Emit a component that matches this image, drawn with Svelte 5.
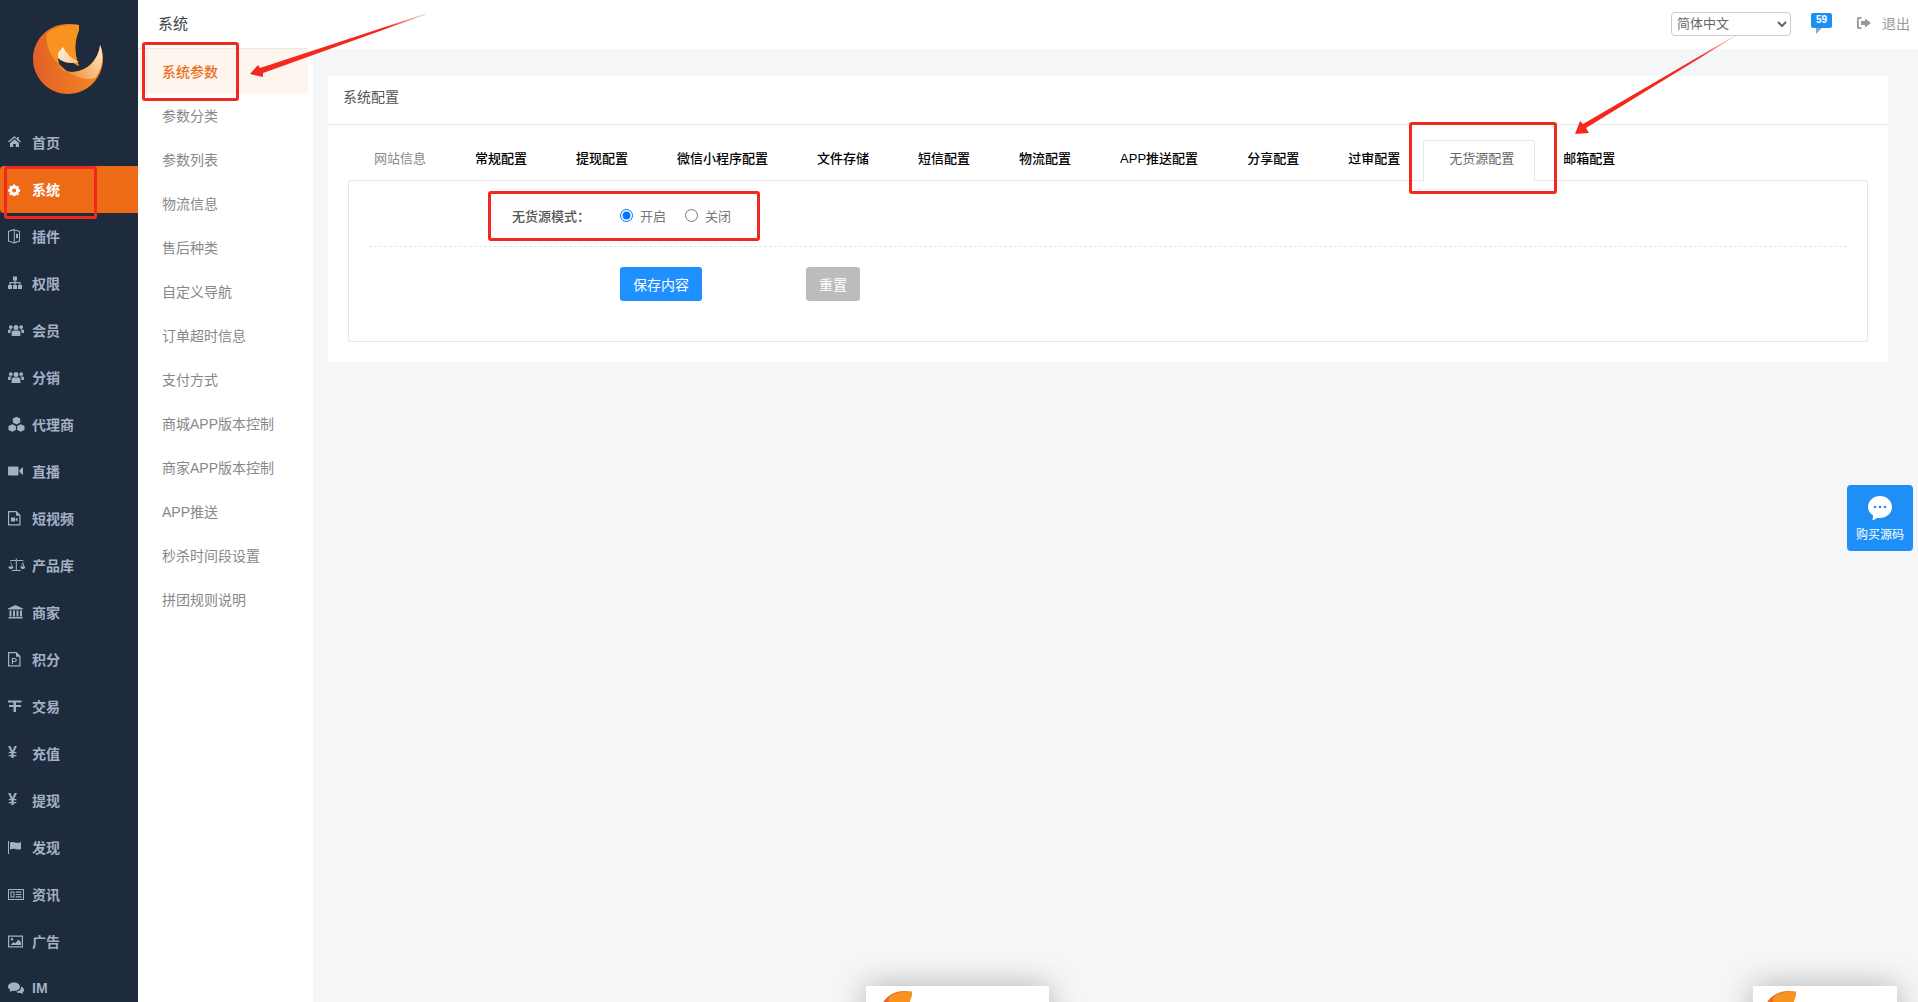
<script>
  const nav = [
    { label: "首页", icon: "home" },
    { label: "系统", icon: "cog", active: true },
    { label: "插件", icon: "plugin" },
    { label: "权限", icon: "sitemap" },
    { label: "会员", icon: "users" },
    { label: "分销", icon: "users" },
    { label: "代理商", icon: "cubes" },
    { label: "直播", icon: "video" },
    { label: "短视频", icon: "fileVideo" },
    { label: "产品库", icon: "balance" },
    { label: "商家", icon: "bank" },
    { label: "积分", icon: "fileP" },
    { label: "交易", icon: "trade" },
    { label: "充值", yen: true },
    { label: "提现", yen: true },
    { label: "发现", icon: "flag" },
    { label: "资讯", icon: "news" },
    { label: "广告", icon: "image" },
    { label: "IM", icon: "comments" },
  ];

  const icons = {
    home: "M6.5 2L0 7.5l.8 1L6.500 3.700l5.700 4.800.8-1-2.300-2V3H9v1.700zM2 9l4.500-3.800L11 9v4H7.800v-3H5.200v3H2z",
    cog: "M5.800 3h2.400l.3 1.500 1.200.5 1.300-.8 1.600 1.600-.8 1.300.5 1.200 1.500.3v2.400l-1.500.3-.5 1.200.8 1.300-1.600 1.600-1.300-.8-1.200.5-.3 1.500H5.800l-.3-1.500-1.200-.5-1.300.8-1.600-1.600.8-1.300-.5-1.200L.2 10.800V8.400l1.500-.3.5-1.200-.8-1.300 1.600-1.600 1.300.8 1.200-.5zM7 7.300a2.300 2.300 0 1 0 0 4.600 2.300 2.300 0 0 0 0-4.600z",
    plugin: "M0 3l5.500-2 6.500 2v10.500L6.500 15.500 0 13.500zM1 3.700v9l4.800 1.500V2.300zM6.800 2.500v11.500l4.200-1.300V3.700zM8 6l2-.5V10l-2 .5z",
    sitemap: "M5 1.500h4v4H7.600V7H12.500V10H14v4h-4v-4h1.400V8.200H7.600V10H9v4H5v-4h1.400V8.200H2.600V10H4v4H0v-4h1.400V7h5V5.500H5z",
    users: "M8 3a2.500 2.500 0 1 1 0 5 2.500 2.500 0 0 1 0-5zM2.800 3.200a1.900 1.900 0 1 1 0 3.800 1.900 1.900 0 0 1 0-3.800zM13.200 3.200a1.900 1.900 0 1 1 0 3.800 1.900 1.900 0 0 1 0-3.800zM3.600 14V10.500c0-1.300 1-2 2-2h4.800c1 0 2 .7 2 2V14zM0 11V9c0-1 .7-1.500 1.500-1.500H4c-.8.5-1.500 1.400-1.500 2.700V11zM16 11V9c0-1-.7-1.500-1.500-1.500H12c.8.5 1.500 1.400 1.500 2.700V11z",
    cubes: "M8.500.8l3.700 1.800v4L8.500 8.400 4.800 6.600v-4zM4.200 8.200l3.700 1.800v4l-3.700 1.800L.5 14v-4zM12.800 8.200l3.700 1.800v4l-3.700 1.800L9.100 14v-4z",
    video: "M0 4.500a1 1 0 0 1 1-1h8.500a1 1 0 0 1 1 1v7a1 1 0 0 1-1 1H1a1 1 0 0 1-1-1zM11.500 7l3.500-3v8l-3.500-3z",
    fileVideo: "M0 1h8.500L12.500 5v10.500H0zM1.200 2.200v12.100h10.100V5.800H8V2.200zM3 7.500h4v4H3zM7.500 9l2-1.500v4l-2-1.500z",
    balance: "M7.800 1.500h1v11.500h4v1H3.800v-1h4V4H2.500l2 5.500h.9a2.500 2.500 0 0 1-5 0h.9l2-5.800H2V3h5.800zM1.300 9.500h2.500L2.500 6zM9 3h6.500v.7h-1l2 5.800h.9a2.500 2.500 0 0 1-5 0h.9l2-5.500H9zM12.900 9.500h2.500L14.100 6z",
    bank: "M7.500 1l7.500 3.500v1H0v-1zM1.500 6.500h2v6h-2zM5 6.500h2v6H5zM8.500 6.500h2v6h-2zM12 6.500h2v6h-2zM.5 13h14v1.500H.5z",
    fileP: "M0 1h8.500L12.500 5v10.500H0zM1.200 2.200v12.100h10.100V5.800H8V2.200zM3.800 7h3a2 2 0 0 1 0 4H5v2H3.800zM5 8v2h1.700a1 1 0 0 0 0-2z",
    trade: "M0 2.500h13.500v2H8V7h5v2H8v5H5.500V9H1V7h4.500V4.500H0z",
    flag: "M0 2h1v13H0zM2 3.500c2-1 3.500-.5 5.500 0s3.500.5 5.500-.5v7c-2 1-3.500.5-5.500 0s-3.500-.5-5.500.5z",
    news: "M0 3h16v11H0zM1 4v9h14V4zM2.500 5.500h4v6h-4zM3.500 6.500v4h2v-4zM7.800 5.500h5.700v1.200H7.800zM7.800 8h5.700v1H7.800zM7.800 10.300h5.700v1.200H7.800z",
    image: "M0 2.500h15v12H0zM1.200 3.700v9.600h12.600V3.700zM4 5a1.300 1.300 0 1 1 0 2.600A1.300 1.300 0 0 1 4 5zM2.500 12l3-3 1.500 1.500 3.500-4 2.500 3V12z",
    comments: "M6 2.500c3.300 0 6 1.800 6 4.200s-2.700 4.200-6 4.200c-.6 0-1.200-.1-1.700-.2L1.500 12.200l.9-2.200C1 9.200 0 8 0 6.700 0 4.300 2.700 2.500 6 2.500zM13 6.500c1.800.6 3 2 3 3.400 0 1-.6 1.900-1.500 2.500l.6 1.800-2.400-1.200c-1.500.2-3.500-.2-4.700-1.300 3 0 5.500-2.300 5-5.200z",
  };

  const subnav = [
    "系统参数", "参数分类", "参数列表", "物流信息", "售后种类", "自定义导航", "订单超时信息",
    "支付方式", "商城APP版本控制", "商家APP版本控制", "APP推送", "秒杀时间段设置", "拼团规则说明",
  ];

  const tabs = [
    "网站信息", "常规配置", "提现配置", "微信小程序配置", "文件存储", "短信配置", "物流配置",
    "APP推送配置", "分享配置", "过审配置", "无货源配置", "邮箱配置",
  ];
  const activeTab = "无货源配置";

  let mode = $state("on");
</script>

{#snippet logo()}
  <svg viewBox="0 0 70 70" class="logo-svg">
    <defs>
      <linearGradient id="lg-base" x1="0" y1="0.7" x2="1" y2="0.6">
        <stop offset="0" stop-color="#e25f28" />
        <stop offset="1" stop-color="#f58a22" />
      </linearGradient>
      <linearGradient id="lg-cres" x1="0.1" y1="0.6" x2="1" y2="0.2">
        <stop offset="0" stop-color="#f58d2c" />
        <stop offset="1" stop-color="#fde2c4" />
      </linearGradient>
      <linearGradient id="lg-tip" x1="0" y1="0" x2="1" y2="1">
        <stop offset="0" stop-color="#fff6ea" />
        <stop offset="1" stop-color="#f9c08c" />
      </linearGradient>
    </defs>
    <path fill="url(#lg-base)" d="M46 1C41 .3 38 0 35 0 15 0 0 16 0 35s16 35 35 35 35-16 35-35c0-5-1-10-3-14-1 13-12 27-28 27-8 0-14-6-14-15 2-3 3-5 5-6 3 6 9 12 16 15-5-13-5-24 0-36z" />
    <path fill="#f7931e" d="M46 1C39 0 24 1 14 9c-2 10 2 26 21 39-7-1-10-6-10-15 2-3 3-5 5-6 3 6 9 12 16 15-5-13-5-24 0-36z" />
    <path fill="url(#lg-cres)" d="M67 21c4 10 3 23-5 33-10 3-24-1-36-14 2 5 7 8 13 8 16 0 27-14 28-27z" />
    <path fill="url(#lg-tip)" d="M25 29l5-6c3 6 9 12 16 15-8 2-16 1-21-4z" />
  </svg>
{/snippet}

<div class="page">
  <aside class="sidebar">
    <div class="logo">{@render logo()}</div>
    <ul class="nav">
      {#each nav as item}
        <li class="nav-item" class:active={item.active}>
          <span class="nav-icon">
            {#if item.yen}
              <span class="yen">¥</span>
            {:else}
              <svg width="17" height="16" viewBox="0 0 17 16" fill="currentColor" fill-rule="evenodd"><path d={icons[item.icon]} /></svg>
            {/if}
          </span>
          <span>{item.label}</span>
        </li>
      {/each}
    </ul>
  </aside>

  <nav class="subnav">
    <div class="subnav-title">系统</div>
    <ul>
      {#each subnav as name, i}
        <li class="sub-item" class:active={i === 0}>{name}</li>
      {/each}
    </ul>
  </nav>

  <div class="main">
    <header class="topbar">
      <select class="lang">
        <option>简体中文</option>
        <option>English</option>
      </select>
      <span class="msg"><span class="badge">59</span></span>
      <span class="logout">
        <svg width="16" height="16" viewBox="0 0 16 16" fill="currentColor"><path d="M5.500 2H2.500A1.500 1.500 0 0 0 1 3.500v9A1.500 1.500 0 0 0 2.500 14h3v-1.800H2.800V3.800h2.700zM9 3.500l6 4.500-6 4.500V10H5V6h4z" /></svg>
        退出
      </span>
    </header>

    <section class="card">
      <div class="card-head">系统配置</div>
      <div class="card-body">
        <ul class="tabs">
          {#each tabs as tab, i}
            <li class="tab" class:active={tab === activeTab} class:first={i === 0}>{tab}</li>
          {/each}
        </ul>
        <div class="panel">
          <div class="form-row">
            <span class="form-label">无货源模式：</span>
            <label class="radio"><input type="radio" name="mode" value="on" bind:group={mode} />开启</label>
            <label class="radio"><input type="radio" name="mode" value="off" bind:group={mode} />关闭</label>
          </div>
          <div class="actions">
            <button class="btn save">保存内容</button>
            <button class="btn reset">重置</button>
          </div>
        </div>
      </div>
    </section>
  </div>

  <div class="float-buy">
    <svg width="24" height="24" viewBox="0 0 24 24">
      <path fill="#fff" d="M12 0c6.600 0 12 4.900 12 11s-5.400 11-12 11c-.8 0-1.500-.1-2.300-.2L4.500 24.500l.6-5C2 17.500 0 14.500 0 11 0 4.900 5.400 0 12 0z" />
      <circle cx="7" cy="11" r="1.300" fill="#1e90f5" />
      <circle cx="12" cy="11" r="1.300" fill="#1e90f5" />
      <circle cx="17" cy="11" r="1.300" fill="#1e90f5" />
    </svg>
    <span>购买源码</span>
  </div>

  <div class="peek peek-a"><div class="peek-logo">{@render logo()}</div></div>
  <div class="peek peek-b"><div class="peek-logo">{@render logo()}</div></div>

  <!-- red marks drawn on top of the screenshot -->
  <div class="mark mark-nav"></div>
  <div class="mark mark-sub"></div>
  <div class="mark mark-form"></div>
  <div class="mark mark-tab"></div>
  <svg class="arrows" width="1918" height="1002" viewBox="0 0 1918 1002">
    <defs>
      <linearGradient id="fade-a" gradientUnits="userSpaceOnUse" x1="426" y1="14" x2="385" y2="28">
        <stop offset="0" stop-color="#f5281e" stop-opacity="0.2" />
        <stop offset="1" stop-color="#f5281e" />
      </linearGradient>
      <linearGradient id="fade-b" gradientUnits="userSpaceOnUse" x1="1736" y1="35" x2="1700" y2="57">
        <stop offset="0" stop-color="#f5281e" stop-opacity="0.2" />
        <stop offset="1" stop-color="#f5281e" />
      </linearGradient>
    </defs>
    <polygon fill="url(#fade-a)" points="426,13.500 426,14.500 263,73 263,77 250,74 258,65 260,68" />
    <polygon fill="url(#fade-b)" points="1736,35 1736,35.800 1586,128 1589,133 1575,134 1580,121 1583,124" />
  </svg>
</div>

<style>
  :global(body) {
    margin: 0;
    background: #f4f6f8;
    font-family: "Liberation Sans", "Noto Sans CJK SC", sans-serif;
  }

  ul {
    list-style: none;
    margin: 0;
    padding: 0;
  }

  .page {
    position: relative;
    display: flex;
    height: 1002px;
    overflow: hidden;
  }

  .sidebar {
    width: 138px;
    flex-shrink: 0;
    background: #1e2b3c;
    color: #a3b0c6;
    overflow: hidden;
  }

  .logo {
    height: 119px;
    padding: 24px 0 0 33px;
    box-sizing: border-box;
  }

  .logo-svg {
    display: block;
    width: 100%;
    height: auto;
  }

  .logo .logo-svg {
    width: 70px;
  }

  .nav-item {
    display: flex;
    align-items: center;
    height: 47px;
    padding: 0 0 2px 8px;
    box-sizing: border-box;
    font-size: 14px;
    font-weight: 700;
  }

  .nav-item.active {
    background: #ed6b17;
    color: #fff;
    border-radius: 4px 0 0 4px;
  }

  .nav-item.active svg {
    transform: scale(0.88);
    transform-origin: left center;
  }

  .nav-icon {
    display: flex;
    width: 24px;
    flex-shrink: 0;
  }

  .yen {
    font-size: 16px;
    line-height: 16px;
  }

  .subnav {
    width: 175px;
    flex-shrink: 0;
    padding-right: 5px;
    box-sizing: border-box;
    background: #fff;
  }

  .subnav-title {
    height: 48px;
    padding-left: 20px;
    line-height: 47px;
    font-size: 15px;
    color: #444;
    border-bottom: 1px solid #e8e8e8;
  }

  .sub-item {
    height: 44px;
    padding-left: 24px;
    line-height: 44px;
    font-size: 14px;
    color: #888;
  }

  .sub-item.active {
    height: 45px;
    line-height: 46px;
    background: #fef5ee;
    color: #e8701f;
    font-weight: 500;
  }

  .main {
    flex: 1;
    min-width: 0;
  }

  .topbar {
    display: flex;
    align-items: center;
    justify-content: flex-end;
    height: 49px;
    padding: 0 8px 2px 0;
    box-sizing: border-box;
    background: #fff;
  }

  .lang {
    width: 120px;
    height: 24px;
    padding: 0 0 0 1px;
    margin-right: 20px;
    border: 1px solid #ccc;
    border-radius: 4px;
    background: #fff;
    color: #666;
    font-family: inherit;
    font-size: 13px;
  }

  .msg {
    position: relative;
    display: block;
    align-self: flex-start;
    margin: 13px 24px 0 0;
  }

  .msg::after {
    content: "";
    position: absolute;
    left: 5px;
    top: 15px;
    border: 3px solid transparent;
    border-top-color: #9aa4ae;
    border-left-color: #9aa4ae;
  }

  .badge {
    display: block;
    width: 21px;
    height: 15px;
    border-radius: 2px;
    background: #1e8ff2;
    color: #fff;
    font-size: 10px;
    font-weight: 700;
    line-height: 14px;
    text-align: center;
  }

  .logout {
    display: flex;
    align-items: center;
    gap: 10px;
    margin-bottom: 2px;
    color: #999;
    font-size: 14px;
  }

  .card {
    margin: 27px 30px 0 15px;
    background: #fff;
  }

  .card-head {
    height: 48px;
    padding-left: 15px;
    line-height: 42px;
    font-size: 14px;
    color: #555;
    border-bottom: 1px solid #e8e8e8;
  }

  .card-body {
    padding: 15px 20px 20px;
  }

  .tabs {
    display: flex;
    gap: 1px;
    height: 40px;
    padding-left: 2px;
    position: relative;
  }

  .tab {
    padding: 0 24px;
    height: 40px;
    line-height: 38px;
    font-size: 13px;
    font-weight: 500;
    color: #000;
    box-sizing: border-box;
  }

  .tab.first {
    color: #888;
    font-weight: 400;
  }

  .tab.active {
    padding: 0 20px 0 25px;
    margin: 0 3px 0 -2px;
    height: 41px;
    line-height: 36px;
    background: #fff;
    color: #666;
    font-weight: 400;
    border: 1px solid #e6e6e6;
    border-bottom: none;
    border-radius: 3px 3px 0 0;
  }

  .panel {
    height: 162px;
    padding: 0 20px;
    box-sizing: border-box;
    border: 1px solid #e6e6e6;
    border-radius: 2px;
  }

  .form-row {
    display: flex;
    align-items: center;
    height: 66px;
    padding-top: 4px;
    box-sizing: border-box;
    font-size: 13px;
    color: #777;
    border-bottom: 1px dashed #e6e6e6;
  }

  .form-label {
    width: 108px;
    margin-left: 143px;
    color: #555;
    font-weight: 500;
  }

  .radio {
    display: flex;
    align-items: center;
    gap: 7px;
    margin-right: 19px;
  }

  .radio input {
    width: 13px;
    height: 13px;
    margin: 0;
  }

  .actions {
    display: flex;
    gap: 104px;
    padding: 20px 0 0 251px;
  }

  .btn {
    height: 34px;
    border: none;
    border-radius: 3px;
    color: #fff;
    font-family: inherit;
    font-size: 14px;
  }

  .btn.save {
    width: 82px;
    background: #1e90ff;
  }

  .btn.reset {
    width: 54px;
    background: #bcbcbc;
  }

  .float-buy {
    position: absolute;
    left: 1847px;
    top: 485px;
    width: 66px;
    height: 66px;
    padding-top: 11px;
    box-sizing: border-box;
    display: flex;
    flex-direction: column;
    align-items: center;
    gap: 5px;
    background: #1e90f5;
    border-radius: 4px;
    color: #fff;
    font-size: 12px;
  }

  .peek {
    position: absolute;
    top: 986px;
    height: 120px;
    background: #fff;
    box-shadow: 0 0 30px rgba(0, 0, 0, 0.28);
    overflow: hidden;
  }

  .peek-a {
    left: 866px;
    width: 183px;
  }

  .peek-b {
    left: 1753px;
    width: 144px;
  }

  .peek-logo {
    width: 50px;
    margin: 5px 0 0 13px;
  }

  .peek-b .peek-logo {
    margin-left: 10px;
  }

  .mark {
    position: absolute;
    box-sizing: border-box;
    border: 3px solid #f0281e;
    border-radius: 3px;
  }

  .mark-nav {
    left: 4px;
    top: 166px;
    width: 93px;
    height: 53px;
  }

  .mark-sub {
    left: 142px;
    top: 42px;
    width: 97px;
    height: 59px;
  }

  .mark-form {
    left: 488px;
    top: 191px;
    width: 272px;
    height: 50px;
  }

  .mark-tab {
    left: 1409px;
    top: 122px;
    width: 148px;
    height: 72px;
  }

  .arrows {
    position: absolute;
    left: 0;
    top: 0;
    pointer-events: none;
  }
</style>
